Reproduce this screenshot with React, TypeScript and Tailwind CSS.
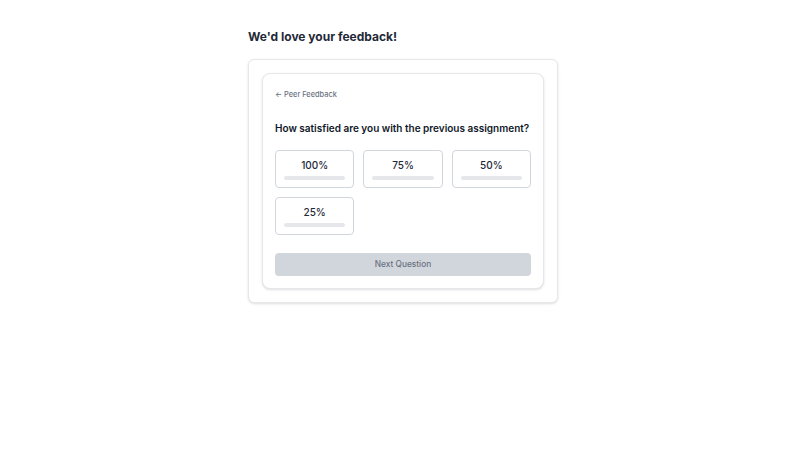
import React from "react";

const options = ["100%", "75%", "50%", "25%"];

export default function App() {
  return (
    <div
      className="min-h-screen bg-white"
      style={{ fontFamily: "Inter, 'Noto Sans', sans-serif" }}
    >
      <div className="mx-auto w-[310px] pt-[27px]">
        <h1 className="text-[12px] leading-[20px] font-bold text-[#1f2937]">
          We'd love your feedback!
        </h1>
        <div className="mt-[12px] rounded-md border border-gray-200 bg-white p-[13px] shadow-sm">
          <div className="rounded-lg border border-gray-200 bg-white p-[12px] shadow-sm">
            <div className="flex items-center gap-[2px] text-[7.4px] leading-[18px] font-medium text-gray-500">
              <span>←</span>
              <span>Peer Feedback</span>
            </div>
            <h2 className="mt-[16px] text-[10px] leading-[16px] font-semibold whitespace-nowrap text-gray-900">
              How satisfied are you with the previous assignment?
            </h2>
            <div className="mt-[14px] grid grid-cols-3 gap-x-[9px] gap-y-[9px]">
              {options.map((o) => (
                <button
                  key={o}
                  className="flex h-[38px] flex-col items-center rounded border border-gray-300 bg-white px-[8px] pt-[7px]"
                >
                  <span className="text-[10px] leading-[14px] font-medium text-gray-800">
                    {o}
                  </span>
                  <span className="mt-[4px] h-[4px] w-full rounded-full bg-gray-200" />
                </button>
              ))}
            </div>
            <button className="mt-[18px] h-[23px] w-full rounded bg-gray-300 text-[8.3px] font-medium text-gray-500">
              Next Question
            </button>
          </div>
        </div>
      </div>
    </div>
  );
}
